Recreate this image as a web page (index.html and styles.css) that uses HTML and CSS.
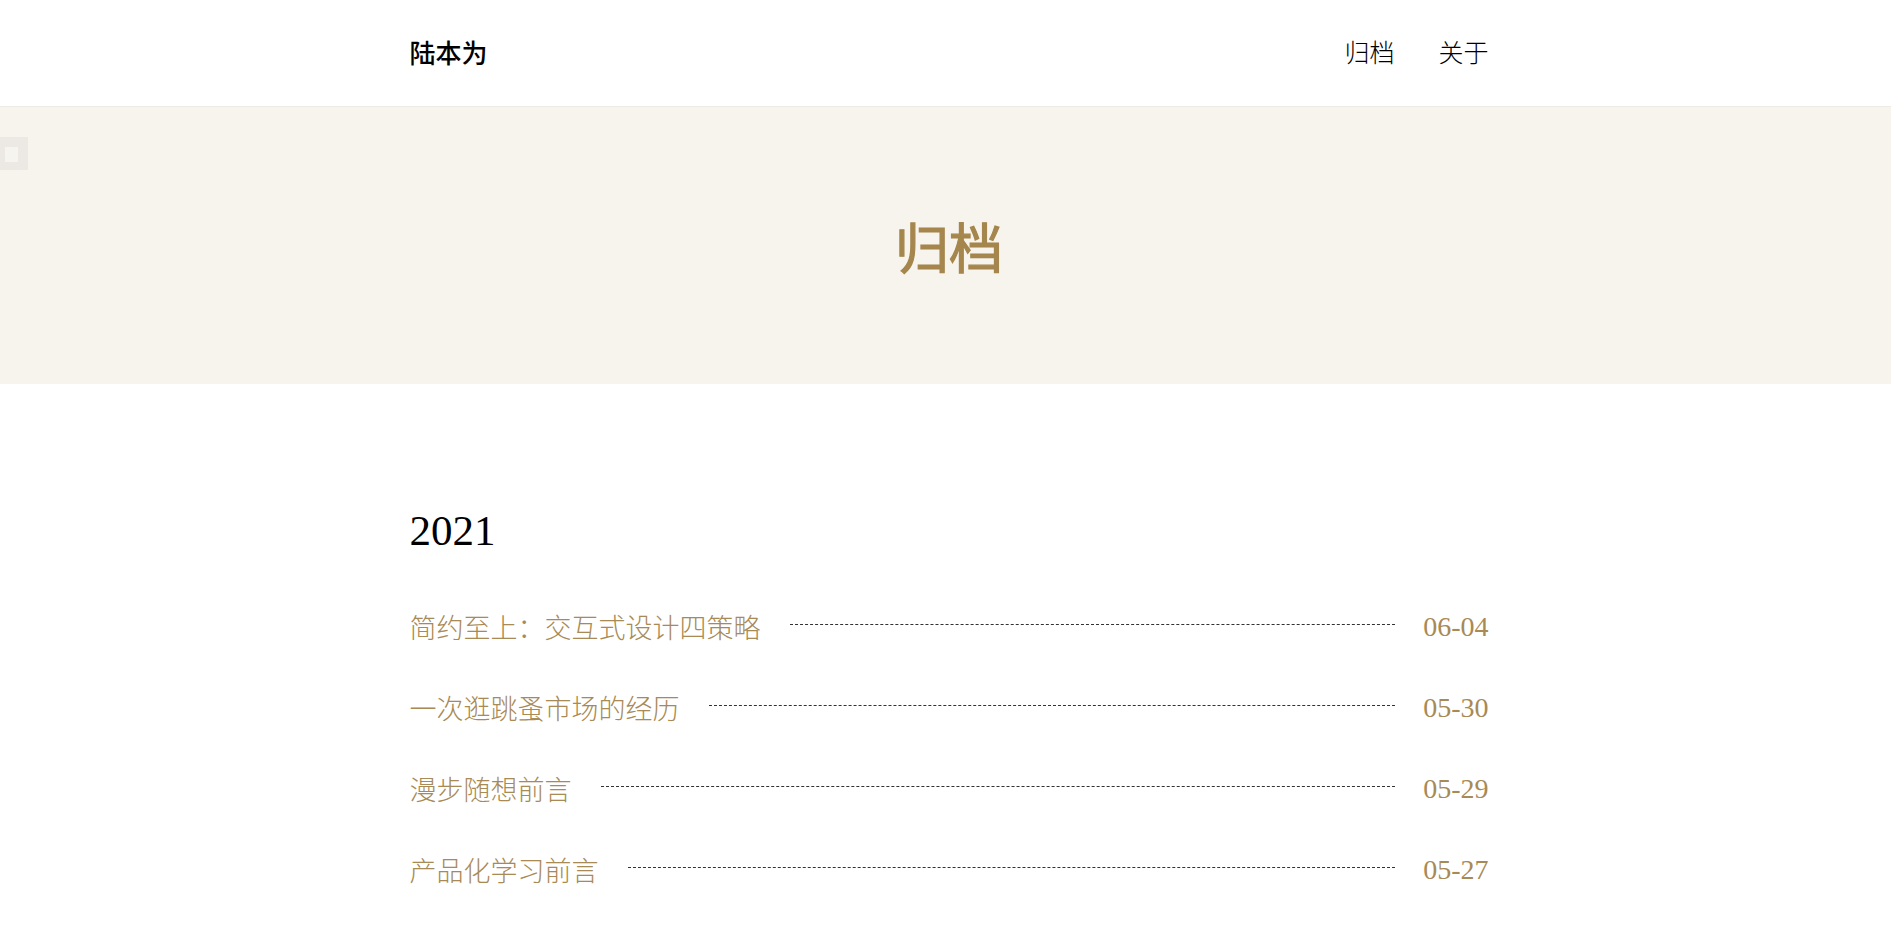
FILE: index.html
```html
<!DOCTYPE html>
<html>
<head>
    <meta charset="UTF-8">
    <title>归档 | 陆本为</title>
    <link rel="stylesheet" href="styles.css">
</head>
<body>
    <div class="widget"><div class="widget-inner"></div></div>

    <header class="header">
        <div class="wrap header-inner">
            <a class="logo" href="#">陆本为</a>
            <nav class="nav">
                <a href="#">归档</a>
                <a href="#">关于</a>
            </nav>
        </div>
    </header>

    <section class="hero">
        <h1>归档</h1>
    </section>

    <main class="wrap archive">
        <h2 class="year">2021</h2>
        <ul class="posts">
            <li class="post">
                <a class="post-title" href="#">简约至上：交互式设计四策略</a>
                <span class="dots"></span>
                <span class="post-date">06-04</span>
            </li>
            <li class="post">
                <a class="post-title" href="#">一次逛跳蚤市场的经历</a>
                <span class="dots"></span>
                <span class="post-date">05-30</span>
            </li>
            <li class="post">
                <a class="post-title" href="#">漫步随想前言</a>
                <span class="dots"></span>
                <span class="post-date">05-29</span>
            </li>
            <li class="post">
                <a class="post-title" href="#">产品化学习前言</a>
                <span class="dots"></span>
                <span class="post-date">05-27</span>
            </li>
        </ul>
    </main>
</body>
</html>
```

FILE: styles.css
```css
* {
    margin: 0;
    padding: 0;
    box-sizing: border-box;
}

body {
    background: #fff;
    color: #000;
    font-family: 'Liberation Serif', 'Noto Sans CJK SC', serif;
    overflow: hidden;
}

a {
    color: inherit;
    text-decoration: none;
}

.wrap {
    width: 1088px;
    margin: 0 auto;
    padding: 0 1px 0 8px;
}

/* шапка */
.header {
    height: 107px;
    border-bottom: 1px solid #eeebe5;
}

.header-inner {
    height: 100%;
    display: flex;
    justify-content: space-between;
    align-items: center;
    padding-bottom: 4px;
}

.logo {
    font-family: 'Noto Sans CJK SC', sans-serif;
    font-size: 26px;
    font-weight: 500;
}

.nav {
    display: flex;
    gap: 44px;
}

.nav a {
    font-family: 'Noto Sans CJK SC', sans-serif;
    font-size: 25px;
    font-weight: 300;
}

.hero {
    height: 277px;
    background: #f7f4ee;
    display: flex;
    justify-content: center;
    align-items: center;
}

.hero h1 {
    font-family: 'Noto Sans CJK SC', sans-serif;
    font-size: 54px;
    font-weight: 400;
    color: #a5864c;
    -webkit-text-stroke: 1.2px #a5864c;
    line-height: 1;
    margin-left: 7px;
}

.archive {
    padding-top: 122px;
}

.year {
    font-size: 43px;
    font-weight: normal;
    line-height: 50px;
}

.posts {
    list-style: none;
    margin-top: 30px;
}

.post {
    height: 81px;
    display: flex;
    align-items: center;
    color: #a78a55;
}

.post-title {
    font-family: 'Noto Sans CJK SC', sans-serif;
    font-size: 27px;
    font-weight: 300;
}

.dots {
    flex: 1;
    margin: 0 28px 0 29px;
    border-top: 1px dashed #333;
    transform: translateY(-2px);
}

.post-date {
    font-size: 28px;
}

/* серый квадратик слева */
.widget {
    position: absolute;
    left: 0;
    top: 137px;
    width: 28px;
    height: 33px;
    background: #ece9e4;
    padding: 10px 0 0 5px;
}

.widget-inner {
    width: 13px;
    height: 15px;
    background: #f6f4ef;
}
```
